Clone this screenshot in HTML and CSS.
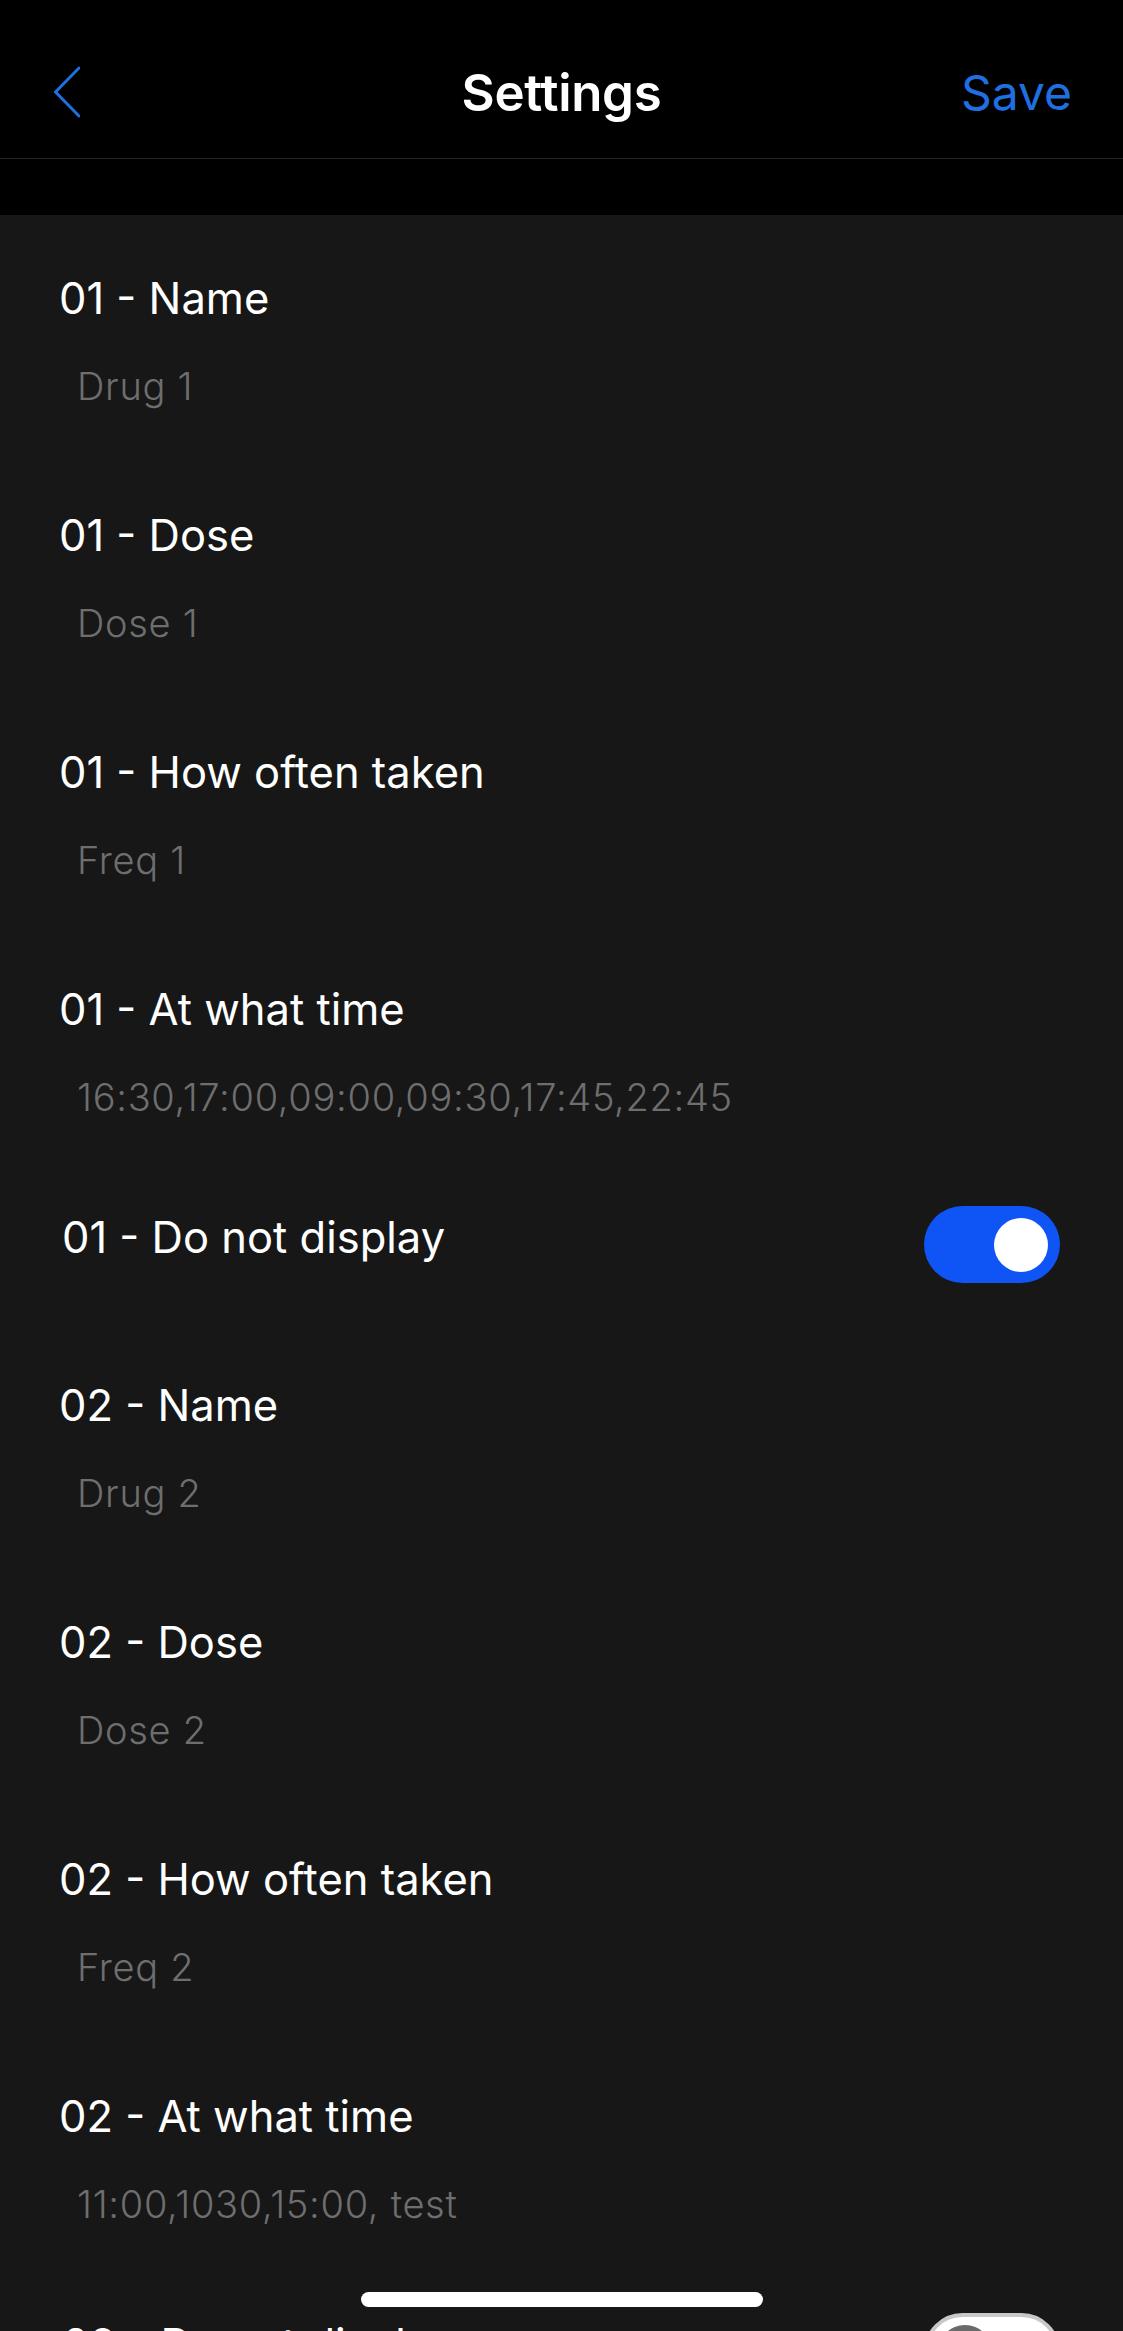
FILE: index.html
```html
<!DOCTYPE html>
<html lang="en">
<head>
<meta charset="utf-8">
<title>Settings</title>
<link rel="stylesheet" href="styles.css">
</head>
<body>
<header class="navbar">
  <div class="nav-inner">
    <button class="nav-back" aria-label="Back">
      <svg width="26" height="52" viewBox="0 0 26 52"><polyline points="25,2 1.5,26 25,50" fill="none" stroke="#1f6fe0" stroke-width="3" stroke-linecap="round" stroke-linejoin="round"/></svg>
    </button>
    <h1 class="nav-title">Settings</h1>
    <button class="nav-save">Save</button>
  </div>
</header>
<div class="band"></div>
<main class="list">
  <div class="field"><div class="label">01 - Name</div><div class="value">Drug 1</div></div>
  <div class="field"><div class="label">01 - Dose</div><div class="value">Dose 1</div></div>
  <div class="field"><div class="label">01 - How often taken</div><div class="value">Freq 1</div></div>
  <div class="field"><div class="label">01 - At what time</div><div class="value">16:30,17:00,09:00,09:30,17:45,22:45</div></div>
  <div class="switch-row"><div class="switch-label">01 - Do not display</div><div class="toggle on"><span class="knob"></span></div></div>
  <div class="field"><div class="label">02 - Name</div><div class="value">Drug 2</div></div>
  <div class="field"><div class="label">02 - Dose</div><div class="value">Dose 2</div></div>
  <div class="field"><div class="label">02 - How often taken</div><div class="value">Freq 2</div></div>
  <div class="field"><div class="label">02 - At what time</div><div class="value">11:00,1030,15:00, test</div></div>
  <div class="switch-row"><div class="switch-label">02 - Do not display</div><div class="toggle off"><span class="knob"></span></div></div>
</main>
<div class="home-indicator"></div>
</body>
</html>
```

FILE: styles.css
```css
html, body {
  margin: 0;
  padding: 0;
  background: #171717;
  font-family: Inter, "Noto Sans", "Liberation Sans", sans-serif;
  color: #fff;
}
body {
  height: 2331px;
  overflow: hidden;
}
.navbar {
  background: #000;
  padding-top: 26px;
  border-bottom: 1px solid #262626;
}
.nav-inner {
  height: 132px;
  display: flex;
  align-items: center;
  justify-content: space-between;
  padding: 0 51px 0 54px;
  position: relative;
}
.nav-back {
  background: none;
  border: 0;
  padding: 0;
  width: 26px;
  height: 52px;
  display: flex;
}
.nav-title {
  margin: 0;
  font-size: 51px;
  font-weight: 600;
  letter-spacing: -0.3px;
  position: absolute;
  left: 50%;
  transform: translateX(-50%);
}
.nav-save {
  background: none;
  border: 0;
  padding: 0;
  font-family: inherit;
  font-size: 48px;
  font-weight: 400;
  color: #1f6fe0;
}
.band {
  height: 56px;
  background: #000;
}
.list {
  padding: 53px 0 0 59px;
  display: flex;
  flex-direction: column;
  gap: 89px;
}
.field {
  display: flex;
  flex-direction: column;
  gap: 28px;
}
.label, .switch-label {
  font-size: 43.5px;
  line-height: 60px;
  font-weight: 400;
  color: #fff;
}
.value {
  padding-left: 18px;
  font-size: 38px;
  letter-spacing: 0.7px;
  line-height: 60px;
  font-weight: 300;
  color: #6e6e6e;
}
.switch-row {
  display: flex;
  align-items: center;
  justify-content: space-between;
  padding-right: 63px;
  margin-top: -10px;
  margin-bottom: 3px;
}
.switch-label {
  padding-left: 3px;
  margin-bottom: 16px;
}
.toggle {
  width: 136px;
  height: 77px;
  border-radius: 39px;
  box-sizing: border-box;
  position: relative;
}
.toggle.on {
  background: #0f55f6;
}
.toggle.off {
  background: #fff;
  border: 4px solid #c8c8c8;
}
.knob {
  position: absolute;
  width: 54px;
  height: 54px;
  border-radius: 50%;
  top: 12px;
}
.toggle.on .knob {
  background: #fff;
  right: 12px;
}
.toggle.off .knob {
  background: #6a6a6a;
  left: 10px;
  top: 8px;
}
.home-indicator {
  position: fixed;
  left: 50%;
  transform: translateX(-50%);
  top: 2292px;
  width: 402px;
  height: 15px;
  border-radius: 8px;
  background: #fff;
}
```
